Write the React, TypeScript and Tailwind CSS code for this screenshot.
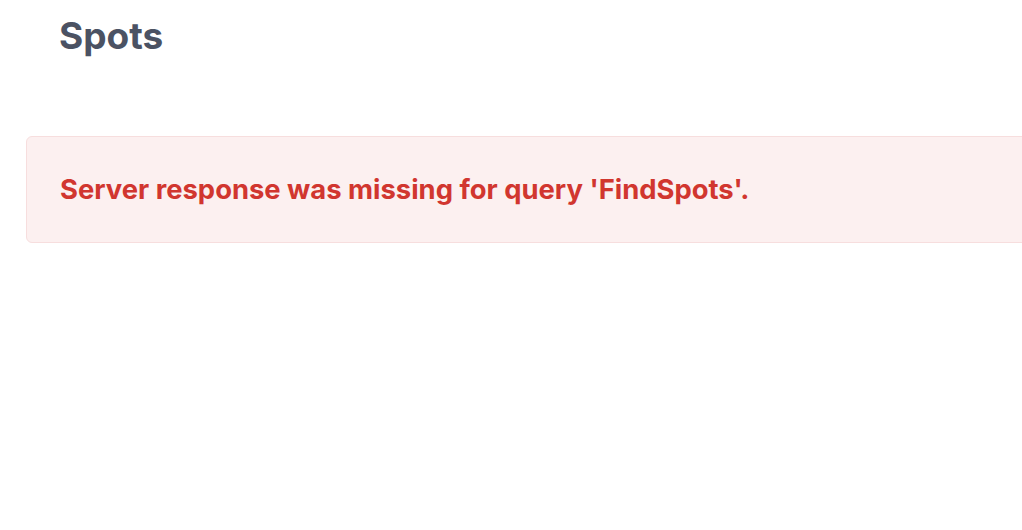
export default function App() {
  return (
    <div className="min-h-screen w-full overflow-hidden bg-white font-['Inter',sans-serif]">
      <h1 className="pl-[59px] pt-[16px] text-[37px] font-bold leading-[40px] text-[#4b5263]">
        Spots
      </h1>
      <div className="ml-[26px] mt-[80px] w-[1040px] rounded-md border border-[#f7dede] bg-[#fcf0f0] px-[33px] py-[37px]">
        <p className="text-[27.4px] font-bold leading-[31px] text-[#d1362f]">
          Server response was missing for query 'FindSpots'.
        </p>
      </div>
    </div>
  );
}
